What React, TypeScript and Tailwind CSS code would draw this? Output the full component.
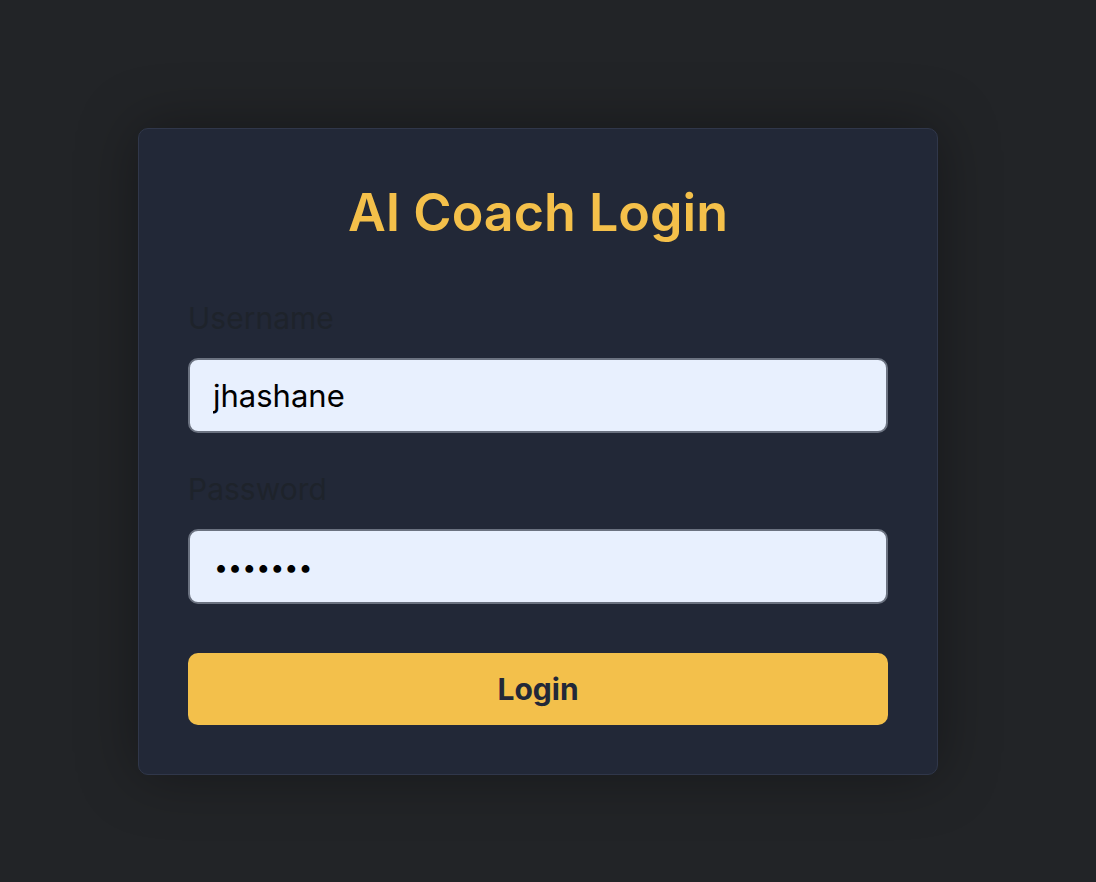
import { useState } from "react"

export default function App() {
  const [username, setUsername] = useState("jhashane")
  const [password, setPassword] = useState("jhashan")

  return (
    <div className="min-h-screen w-full bg-[#222427] flex justify-center pt-[128px] pr-[20px] font-['Inter',sans-serif]">
      <div className="w-[800px] h-[647px] rounded-[10px] border border-[#30374a] bg-[#222837] shadow-[0_0_60px_rgba(0,0,0,0.35)] px-[49px] pt-[48px]">
        <h1 className="text-center text-[52px] leading-[1.2] font-semibold text-[#f4c04a] mt-[5px] mb-[56px]">
          AI Coach Login
        </h1>

        <form onSubmit={(e) => e.preventDefault()}>
          <div className="mb-[38px]">
            <label className="block text-[30px] leading-[36px] text-[#1e232b] mb-[22px]">Username</label>
            <input
              type="text"
              value={username}
              onChange={(e) => setUsername(e.target.value)}
              className="w-full h-[75px] rounded-[10px] border-2 border-[#6b7280] bg-[#e8f0fe] px-[23px] text-[31px] text-black outline-none"
            />
          </div>

          <div className="mb-[49px]">
            <label className="block text-[30px] leading-[36px] text-[#1e232b] mb-[22px]">Password</label>
            <input
              type="password"
              value={password}
              onChange={(e) => setPassword(e.target.value)}
              className="w-full h-[75px] rounded-[10px] border-2 border-[#6b7280] bg-[#e8f0fe] px-[24px] text-[25px] text-black outline-none"
            />
          </div>

          <button
            type="submit"
            className="w-full h-[72px] rounded-[10px] bg-[#f3c04b] text-[30px] font-bold text-[#222838]"
          >
            Login
          </button>
        </form>
      </div>
    </div>
  )
}
